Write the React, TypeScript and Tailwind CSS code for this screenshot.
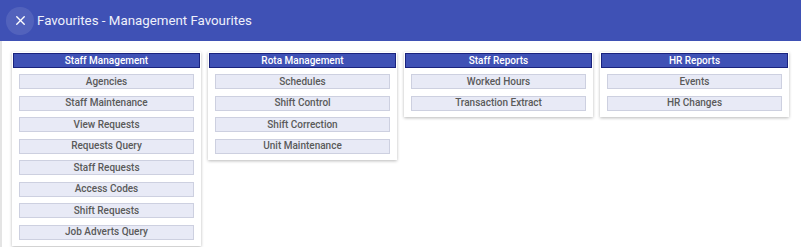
import { X } from 'lucide-react'

const groups: { title: string; items: string[] }[] = [
  {
    title: 'Staff Management',
    items: [
      'Agencies',
      'Staff Maintenance',
      'View Requests',
      'Requests Query',
      'Staff Requests',
      'Access Codes',
      'Shift Requests',
      'Job Adverts Query',
    ],
  },
  { title: 'Rota Management', items: ['Schedules', 'Shift Control', 'Shift Correction', 'Unit Maintenance'] },
  { title: 'Staff Reports', items: ['Worked Hours', 'Transaction Extract'] },
  { title: 'HR Reports', items: ['Events', 'HR Changes'] },
]

export default function App() {
  return (
    <div className="w-[801px] h-[247px] overflow-hidden bg-white font-['Roboto',sans-serif]">
      {/* Title bar */}
      <div className="h-[41px] bg-[#3f51b5] flex items-center pl-[6px]">
        <button className="w-[28px] h-[28px] rounded-full bg-white/10 flex items-center justify-center text-white">
          <X size={15} strokeWidth={2.2} />
        </button>
        <span className="ml-[3px] text-[13.3px] text-[#eef0fb]">Favourites - Management Favourites</span>
      </div>

      {/* Groups */}
      <div className="h-[206px] border-l-2 border-[#e4e4e4] pl-[10px] pt-[11px] flex items-start gap-[7px]">
        {groups.map((g) => (
          <Group key={g.title} title={g.title} items={g.items} />
        ))}
      </div>
    </div>
  )
}

function Group({ title, items }: { title: string; items: string[] }) {
  return (
    <div className="w-[189px] bg-white p-px pb-[6px] shadow-[0_1px_3px_rgba(0,0,0,0.28)]">
      <div className="h-[15px] bg-[#3f51b5] border border-[#1a237e] flex items-center justify-center text-[10px] font-medium text-white leading-none">
        {title}
      </div>
      <div className="mt-[6px] px-[6px] flex flex-col gap-[6.5px]">
        {items.map((item) => (
          <div
            key={item}
            className="h-[15px] bg-[#e8eaf6] border border-[#cdd0e0] flex items-center justify-center text-[10px] font-medium text-[#5a5a5a] leading-none"
          >
            {item}
          </div>
        ))}
      </div>
    </div>
  )
}
